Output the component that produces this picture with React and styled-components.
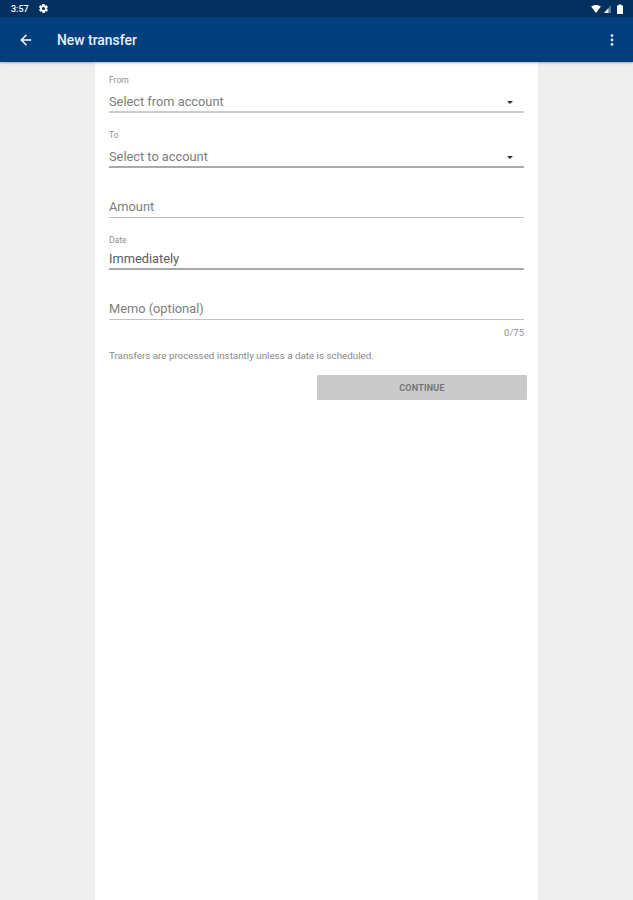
import React from 'react';
import styled, { createGlobalStyle } from 'styled-components';
import { ArrowLeft } from 'lucide-react';

const Global = createGlobalStyle`
  html, body {
    margin: 0;
    padding: 0;
    background: #eeeeee;
    font-family: Roboto, "Liberation Sans", sans-serif;
  }
`;

const Screen = styled.div`
  width: 633px;
  height: 900px;
  display: flex;
  flex-direction: column;
  overflow: hidden;
  background: #eeeeee;
`;

const StatusBar = styled.div`
  height: 17px;
  flex: none;
  background: #03305f;
  color: #fff;
  display: flex;
  align-items: center;
  padding: 0 9px 0 11px;
  font-size: 9px;
  font-weight: 500;
`;

const StatusTime = styled.span`
  margin-right: 9px;
`;

const StatusIcons = styled.div`
  margin-left: auto;
  display: flex;
  align-items: center;
  gap: 3px;
`;

const Battery = styled.svg`
  margin-left: 2px;
`;

const AppBar = styled.header`
  height: 45px;
  flex: none;
  background: #033f7d;
  color: #fff;
  display: flex;
  align-items: center;
  padding: 0 19px 0 18px;
  box-shadow: 0 1px 2px rgba(0, 0, 0, 0.3);
  position: relative;
`;

const Title = styled.h1`
  margin: 0 0 0 23px;
  font-size: 13.9px;
  font-weight: 500;
  color: #e9eef5;
`;

const Overflow = styled.svg`
  margin-left: auto;
`;

const Sheet = styled.main`
  flex: 1;
  width: 443px;
  margin-left: 95px;
  background: #fff;
  padding: 13px 14px 0;
  box-sizing: border-box;
  display: flex;
  flex-direction: column;
`;

const Field = styled.div`
  margin-top: ${(p) => p.$top || 0}px;
  display: flex;
  flex-direction: column;
`;

const Label = styled.label`
  font-size: 8.5px;
  line-height: 11px;
  color: #8f8f8f;
`;

const Value = styled.div`
  display: flex;
  align-items: center;
  justify-content: space-between;
  font-size: 12.8px;
  line-height: 16px;
  color: ${(p) => (p.$filled ? '#5c5c5c' : '#7d7d7d')};
  margin-top: ${(p) => p.$gap || 0}px;
  padding-bottom: ${(p) => p.$pad || 0}px;
  border-bottom: ${(p) => p.$weight || 1}px solid ${(p) => p.$line || '#c2c2c2'};
`;

const Caret = styled.span`
  width: 0;
  height: 0;
  margin-right: 11px;
  border-left: 3.5px solid transparent;
  border-right: 3.5px solid transparent;
  border-top: 3.5px solid #333;
`;

const Counter = styled.div`
  align-self: flex-end;
  margin-top: 7px;
  font-size: 9.5px;
  line-height: 12px;
  color: #8f8f8f;
`;

const Helper = styled.p`
  margin: 11px 0 0;
  font-size: 9.8px;
  line-height: 12px;
  color: #8a8a8a;
`;

const Continue = styled.button`
  align-self: flex-end;
  margin: 13px -3px 0 0;
  width: 210px;
  height: 25px;
  border: 0;
  border-radius: 1px;
  background: #cacaca;
  color: #757575;
  font-family: inherit;
  font-size: 9px;
  font-weight: 700;
  letter-spacing: 0.2px;
`;

export default function App() {
  return (
    <Screen>
      <Global />
      <StatusBar>
        <StatusTime>3:57</StatusTime>
        <svg width="11" height="11" viewBox="0 0 24 24" fill="#fff">
          <path d="M19.4 13c.1-.3.1-.7.1-1s0-.7-.1-1l2.1-1.6c.2-.2.2-.4.1-.6l-2-3.5c-.1-.2-.4-.3-.6-.2l-2.5 1c-.5-.4-1.1-.7-1.7-1l-.4-2.6c0-.3-.2-.5-.5-.5h-4c-.3 0-.5.2-.5.4l-.4 2.7c-.6.2-1.1.6-1.7 1l-2.5-1c-.2-.1-.5 0-.6.2l-2 3.5c-.1.2-.1.5.1.6L4.6 11c-.1.3-.1.7-.1 1s0 .7.1 1l-2.1 1.6c-.2.2-.2.4-.1.6l2 3.5c.1.2.4.3.6.2l2.5-1c.5.4 1.1.7 1.7 1l.4 2.6c0 .2.2.4.5.4h4c.3 0 .5-.2.5-.4l.4-2.6c.6-.3 1.2-.6 1.7-1l2.5 1c.2.1.5 0 .6-.2l2-3.5c.1-.2.1-.5-.1-.6L19.4 13zM12 15.5a3.5 3.5 0 1 1 0-7 3.5 3.5 0 0 1 0 7z" />
        </svg>
        <StatusIcons>
          <svg width="10" height="8" viewBox="0 0 11 9">
            <path d="M0 1.8C1.5.6 3.4 0 5.5 0s4 .6 5.5 1.8L5.5 9z" fill="#fff" />
          </svg>
          <svg width="7" height="8" viewBox="0 0 8 9">
            <path d="M8 0v9H0z" fill="#fff" opacity="0.35" />
            <path d="M5 3.5V9H0z" fill="#fff" />
          </svg>
          <Battery width="8" height="10" viewBox="0 0 8 10">
            <path d="M1 1.5h1.6V.5h2.8v1H7V10H1z" fill="#fff" />
          </Battery>
        </StatusIcons>
      </StatusBar>
      <AppBar>
        <ArrowLeft size={16} strokeWidth={2.2} color="#fff" />
        <Title>New transfer</Title>
        <Overflow width="4" height="12" viewBox="0 0 4 12" fill="#dfe6ef">
          <circle cx="2" cy="1.6" r="1.4" />
          <circle cx="2" cy="6" r="1.4" />
          <circle cx="2" cy="10.4" r="1.4" />
        </Overflow>
      </AppBar>
      <Sheet>
        <Field>
          <Label>From</Label>
          <Value $gap={8} $weight={2} $line="#cdcdcd" $pad={1}>
            Select from account
            <Caret />
          </Value>
        </Field>
        <Field $top={17}>
          <Label>To</Label>
          <Value $gap={8} $weight={2} $line="#ababab" $pad={1}>
            Select to account
            <Caret />
          </Value>
        </Field>
        <Field $top={31}>
          <Value $pad={2}>Amount</Value>
        </Field>
        <Field $top={17}>
          <Label>Date</Label>
          <Value $gap={5} $filled $weight={2} $line="#a8a8a8" $pad={1}>
            Immediately
          </Value>
        </Field>
        <Field $top={31}>
          <Value $pad={2}>Memo (optional)</Value>
        </Field>
        <Counter>0/75</Counter>
        <Helper>Transfers are processed instantly unless a date is scheduled.</Helper>
        <Continue>CONTINUE</Continue>
      </Sheet>
    </Screen>
  );
}
